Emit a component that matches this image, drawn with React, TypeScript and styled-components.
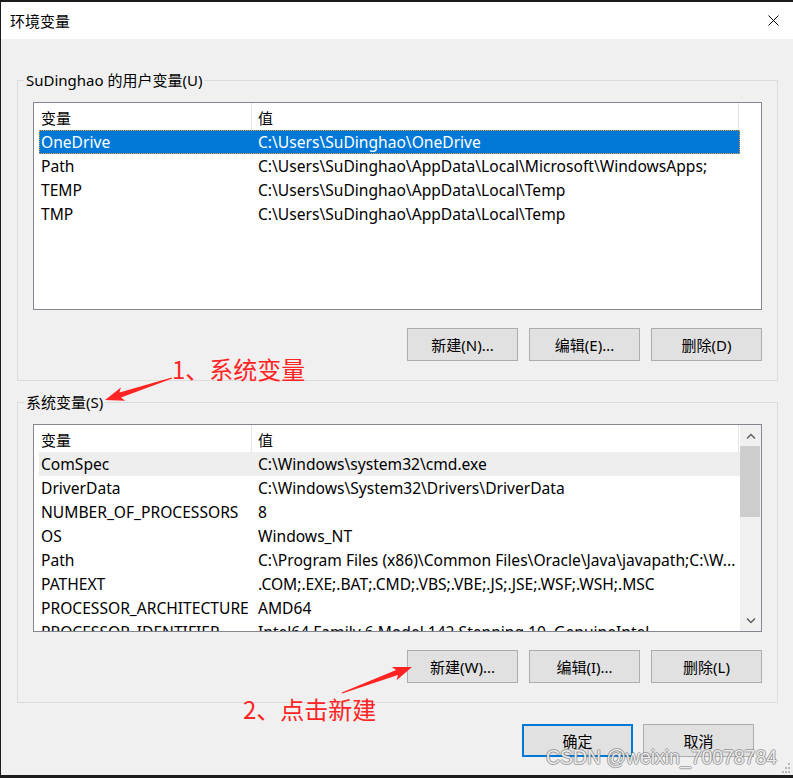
import React from "react";
import styled, { createGlobalStyle } from "styled-components";

const GlobalStyle = createGlobalStyle`
  html, body { margin: 0; padding: 0; background: #ffffff; }
  body {
    font-family: "Noto Sans", "Noto Sans CJK SC", sans-serif;
    font-size: 15px;
    color: #000;
  }
  * { box-sizing: border-box; }
`;

const Window = styled.div`
  position: relative;
  width: 793px;
  height: 778px;
  border-top: 2px solid #1c1c1c;
  border-left: 1px solid #1c1c1c;
  border-bottom: 3px solid #1c1c1c;
  background: #f0f0f0;
  display: flex;
  flex-direction: column;
  overflow: hidden;
`;

const TitleBar = styled.div`
  height: 37px;
  flex: none;
  background: #ffffff;
  display: flex;
  align-items: center;
  justify-content: space-between;
  padding: 0 14px 0 9px;
`;

const Title = styled.span`
  font-size: 15px;
  line-height: 20px;
`;

const CloseIcon = styled.svg`
  width: 11px;
  height: 11px;
  display: block;
`;

const Body = styled.div`
  flex: 1;
  display: flex;
  flex-direction: column;
  padding: 31px 15px 0 16px;
`;

const GroupBox = styled.fieldset<{ $gapTop?: number }>`
  margin: ${(p) => p.$gapTop ?? 0}px 0 0 0;
  padding: 0;
  min-width: 0;
  border: 1px solid #dcdcdc;
`;

const Legend = styled.legend`
  margin-left: 6px;
  padding: 0 2px;
  font-size: 15px;
  line-height: 20px;
`;

const GroupContent = styled.div`
  padding: 12px 15px 19px 15px;
`;

const ListView = styled.div`
  height: 208px;
  border: 1px solid #828790;
  background: #ffffff;
  display: flex;
  overflow: hidden;
`;

const ItemsPane = styled.div`
  width: 706px;
  flex: none;
  display: flex;
  flex-direction: column;
  overflow: hidden;
`;

const HeaderRow = styled.div`
  height: 27px;
  flex: none;
  display: flex;
  margin-right: 1px;
`;

const HeaderCell = styled.div<{ $w?: number; $pad: number }>`
  ${(p) => (p.$w ? `width: ${p.$w}px; flex: none;` : "flex: 1;")}
  border-right: 1px solid #e5e5e5;
  padding-left: ${(p) => p.$pad}px;
  padding-top: 3px;
  display: flex;
  align-items: center;
  line-height: 20px;
`;

const Row = styled.div<{ $state?: "selected" | "hover" }>`
  height: 24px;
  flex: none;
  margin-left: 5px;
  display: flex;
  align-items: center;
  white-space: nowrap;
  font-size: 15.6px;
  line-height: 22px;
  border: 1px ${(p) => (p.$state === "selected" ? "dotted #f59a3c" : "solid transparent")};
  background: ${(p) =>
    p.$state === "selected" ? "#0078d7" : p.$state === "hover" ? "#eeeeee" : "transparent"};
  color: ${(p) => (p.$state === "selected" ? "#ffffff" : "#000000")};
`;

const NameCell = styled.span`
  width: 218px;
  flex: none;
  padding-left: 1px;
  overflow: hidden;
`;

const ValueCell = styled.span`
  flex: 1;
  overflow: hidden;
`;

const BlankGutter = styled.div`
  flex: 1;
`;

const ScrollBar = styled.div`
  flex: 1;
  background: #f0f0f0;
  display: flex;
  flex-direction: column;
`;

const ScrollButton = styled.div`
  height: 21px;
  flex: none;
  display: flex;
  align-items: center;
  justify-content: center;
`;

const Thumb = styled.div`
  height: 71px;
  flex: none;
  margin: 0 1px 0 0;
  background: #cdcdcd;
`;

const ScrollTrack = styled.div`
  flex: 1;
`;

const ButtonRow = styled.div<{ $top: number; $right?: number; $gap: number }>`
  display: flex;
  justify-content: flex-end;
  gap: ${(p) => p.$gap}px;
  margin-top: ${(p) => p.$top}px;
  padding-right: ${(p) => p.$right ?? 0}px;
`;

const Button = styled.button<{ $primary?: boolean }>`
  width: 111px;
  height: 33px;
  padding: 0;
  margin: 0;
  background: #e1e1e1;
  border: ${(p) => (p.$primary ? "2px solid #0078d7" : "1px solid #adadad")};
  font-family: "Noto Sans", "Noto Sans CJK SC", sans-serif;
  font-size: 15px;
  line-height: 20px;
  color: #000;
`;

const Note = styled.span<{ $x: number; $y: number }>`
  position: absolute;
  left: ${(p) => p.$x}px;
  top: ${(p) => p.$y}px;
  font-family: "Noto Sans CJK SC", sans-serif;
  font-size: 24px;
  line-height: 30px;
  color: #ff2424;
  white-space: nowrap;
`;

const Overlay = styled.svg`
  position: absolute;
  left: 0;
  top: 0;
  width: 792px;
  height: 773px;
  pointer-events: none;
`;

const Watermark = styled.span`
  position: absolute;
  left: 545px;
  top: 744px;
  font-family: "Liberation Sans", Arial, sans-serif;
  font-size: 19.4px;
  line-height: 22px;
  color: rgba(255, 255, 255, 0.85);
  text-shadow: 1px 0 0 rgba(110, 110, 110, 0.55), -1px 0 0 rgba(110, 110, 110, 0.55),
    0 1px 0 rgba(110, 110, 110, 0.55), 0 -1px 0 rgba(110, 110, 110, 0.55);
  white-space: nowrap;
`;

const Grip = styled.svg`
  position: absolute;
  right: 2px;
  bottom: 1px;
  width: 10px;
  height: 12px;
`;

type Item = { name: string; value: string; state?: "selected" | "hover" };

const userVars: Item[] = [
  { name: "OneDrive", value: "C:\\Users\\SuDinghao\\OneDrive", state: "selected" },
  { name: "Path", value: "C:\\Users\\SuDinghao\\AppData\\Local\\Microsoft\\WindowsApps;" },
  { name: "TEMP", value: "C:\\Users\\SuDinghao\\AppData\\Local\\Temp" },
  { name: "TMP", value: "C:\\Users\\SuDinghao\\AppData\\Local\\Temp" },
];

const sysVars: Item[] = [
  { name: "ComSpec", value: "C:\\Windows\\system32\\cmd.exe", state: "hover" },
  { name: "DriverData", value: "C:\\Windows\\System32\\Drivers\\DriverData" },
  { name: "NUMBER_OF_PROCESSORS", value: "8" },
  { name: "OS", value: "Windows_NT" },
  { name: "Path", value: "C:\\Program Files (x86)\\Common Files\\Oracle\\Java\\javapath;C:\\W..." },
  { name: "PATHEXT", value: ".COM;.EXE;.BAT;.CMD;.VBS;.VBE;.JS;.JSE;.WSF;.WSH;.MSC" },
  { name: "PROCESSOR_ARCHITECTURE", value: "AMD64" },
  { name: "PROCESSOR_IDENTIFIER", value: "Intel64 Family 6 Model 142 Stepping 10, GenuineIntel" },
];

function arrowPoints(tx: number, ty: number, px: number, py: number) {
  const dx = px - tx;
  const dy = py - ty;
  const L = Math.hypot(dx, dy);
  const ux = dx / L;
  const uy = dy / L;
  const nx = -uy;
  const ny = ux;
  const headLen = 19;
  const headW = 7;
  const shaftW = 2.6;
  const tailW = 0.6;
  const at = (d: number, w: number) => `${(tx + ux * d + nx * w).toFixed(1)},${(ty + uy * d + ny * w).toFixed(1)}`;
  const b = L - headLen;
  return [
    at(0, tailW),
    at(b + 3, shaftW),
    at(b, headW),
    `${px},${py}`,
    at(b, -headW),
    at(b + 3, -shaftW),
    at(0, -tailW),
  ].join(" ");
}

function VarList({ items, scroll }: { items: Item[]; scroll?: boolean }) {
  return (
    <ListView>
      <ItemsPane>
        <HeaderRow>
          <HeaderCell $w={218} $pad={7}>变量</HeaderCell>
          <HeaderCell $pad={6}>值</HeaderCell>
        </HeaderRow>
        {items.map((it) => (
          <Row key={it.name + it.value} $state={it.state}>
            <NameCell>{it.name}</NameCell>
            <ValueCell>{it.value}</ValueCell>
          </Row>
        ))}
      </ItemsPane>
      {scroll ? (
        <ScrollBar>
          <ScrollButton>
            <svg width="10" height="6" viewBox="0 0 10 6">
              <polyline points="1,5.5 5,1.5 9,5.5" fill="none" stroke="#606060" strokeWidth="1.5" />
            </svg>
          </ScrollButton>
          <Thumb />
          <ScrollTrack />
          <ScrollButton>
            <svg width="10" height="6" viewBox="0 0 10 6">
              <polyline points="1,0.5 5,4.5 9,0.5" fill="none" stroke="#606060" strokeWidth="1.5" />
            </svg>
          </ScrollButton>
        </ScrollBar>
      ) : (
        <BlankGutter />
      )}
    </ListView>
  );
}

export default function App() {
  return (
    <>
      <GlobalStyle />
      <Window>
        <TitleBar>
          <Title>环境变量</Title>
          <CloseIcon viewBox="0 0 11 11">
            <line x1="0.5" y1="0.5" x2="10.5" y2="10.5" stroke="#000" strokeWidth="1" />
            <line x1="10.5" y1="0.5" x2="0.5" y2="10.5" stroke="#000" strokeWidth="1" />
          </CloseIcon>
        </TitleBar>
        <Body>
          <GroupBox>
            <Legend>SuDinghao 的用户变量(U)</Legend>
            <GroupContent>
              <VarList items={userVars} />
              <ButtonRow $top={18} $gap={11}>
                <Button>新建(N)...</Button>
                <Button>编辑(E)...</Button>
                <Button>删除(D)</Button>
              </ButtonRow>
            </GroupContent>
          </GroupBox>
          <GroupBox $gapTop={11}>
            <Legend>系统变量(S)</Legend>
            <GroupContent>
              <VarList items={sysVars} scroll />
              <ButtonRow $top={18} $gap={11}>
                <Button>新建(W)...</Button>
                <Button>编辑(I)...</Button>
                <Button>删除(L)</Button>
              </ButtonRow>
            </GroupContent>
          </GroupBox>
          <ButtonRow $top={21} $right={24} $gap={10}>
            <Button $primary>确定</Button>
            <Button>取消</Button>
          </ButtonRow>
        </Body>

        <Overlay viewBox="0 0 792 773">
          <polygon points={arrowPoints(171, 376, 104, 398)} fill="#ff2424" />
          <polygon points={arrowPoints(341, 691, 411, 665)} fill="#ff2424" />
        </Overlay>
        <Note $x={171} $y={352}>1、系统变量</Note>
        <Note $x={242} $y={692}>2、点击新建</Note>
        <Watermark>CSDN @weixin_70078784</Watermark>
        <Grip viewBox="0 0 10 12">
          <rect x="7" y="1" width="2" height="2" fill="#b8b8b8" />
          <rect x="4" y="5" width="2" height="2" fill="#b8b8b8" />
          <rect x="7" y="5" width="2" height="2" fill="#b8b8b8" />
          <rect x="1" y="9" width="2" height="2" fill="#b8b8b8" />
          <rect x="4" y="9" width="2" height="2" fill="#b8b8b8" />
          <rect x="7" y="9" width="2" height="2" fill="#b8b8b8" />
        </Grip>
      </Window>
    </>
  );
}
